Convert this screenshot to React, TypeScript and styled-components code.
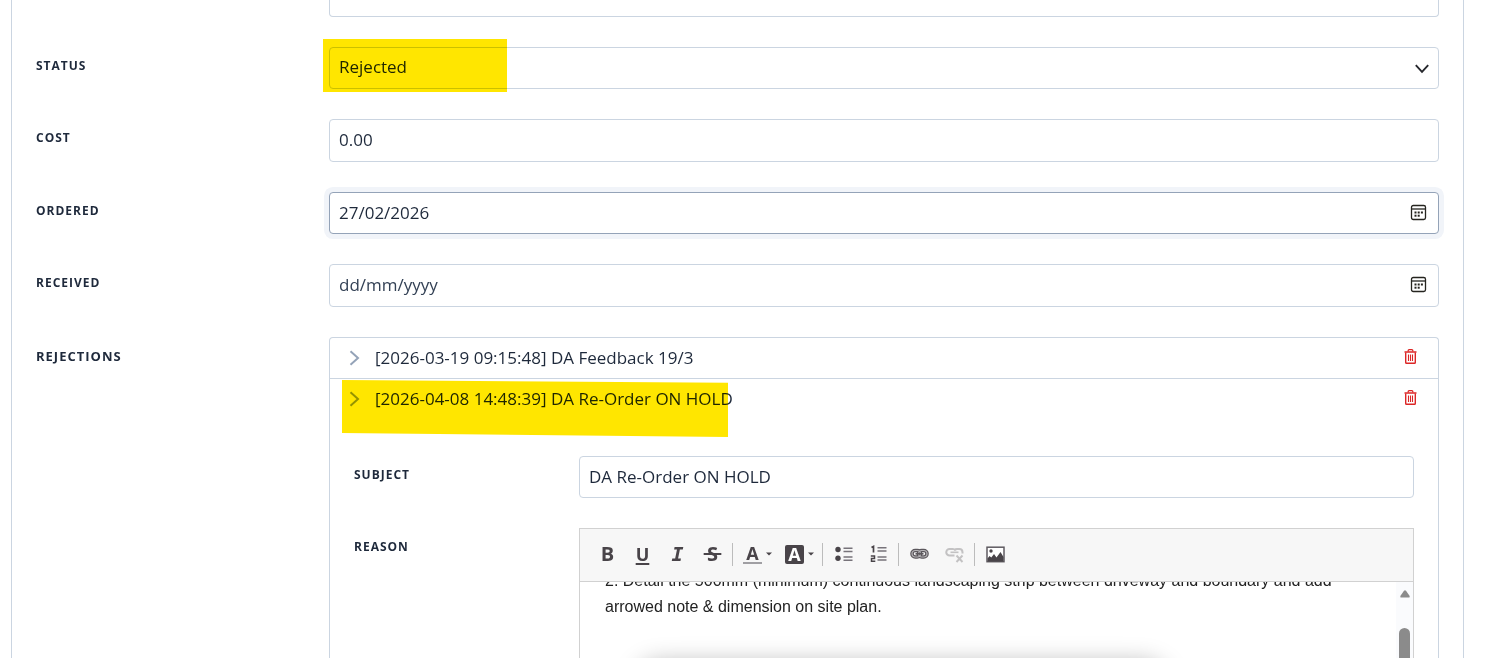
import React from "react";
import styled, { createGlobalStyle, css } from "styled-components";

const Global = createGlobalStyle`
  *, *::before, *::after { box-sizing: border-box; }
  body {
    margin: 0;
    background: #fff;
    color: #1e293b;
    font-family: "Segoe UI", "Open Sans", "Noto Sans", sans-serif;
    font-size: 17px;
    overflow: hidden;
  }
  button, input, select { font: inherit; color: inherit; }
`;

const line = "#cbd5e1";

const Page = styled.main`
  display: flex;
  height: 100vh;
  padding: 0 21px 0 11px;
`;

const Card = styled.form`
  flex: 1;
  min-width: 0;
  display: flex;
  flex-direction: column;
  gap: 30px;
  padding: 0 24px;
  border: solid ${line};
  border-width: 0 1px;
`;

const Row = styled.div<{ $fill?: boolean; $labelWidth?: number }>`
  display: grid;
  grid-template-columns: ${(p) => p.$labelWidth ?? 293}px minmax(0, 1fr);
  ${(p) =>
    p.$fill &&
    css`
      flex: 1;
      min-height: 0;
      grid-template-rows: minmax(0, 1fr);
    `}
`;

const labelText = css<{ $large?: boolean }>`
  padding-top: 9px;
  font-size: ${(p) => (p.$large ? 13 : 12)}px;
  line-height: 20px;
  font-weight: 700;
  letter-spacing: 1px;
  text-transform: uppercase;
`;
const Label = styled.label`
  ${labelText}
`;
const GroupLabel = styled.span<{ $large?: boolean }>`
  ${labelText}
`;

const Control = styled.div`
  position: relative;
  min-width: 0;
`;

const fieldBox = css`
  display: block;
  width: 100%;
  padding: 0 9px;
  border: 1px solid ${line};
  border-radius: 4px;
  background: #fff;
  outline: none;
`;

const TextInput = styled.input<{ $tall?: boolean; $active?: boolean }>`
  ${fieldBox}
  height: ${(p) => (p.$tall ? 43 : 42)}px;
  padding-bottom: 2px;
  &::placeholder {
    color: #334155;
    opacity: 1;
  }
  ${(p) =>
    p.$active &&
    css`
      border-color: #94a3b8;
      box-shadow: 0 0 0 5px #f1f4f9;
    `}
`;

const Select = styled.select`
  ${fieldBox}
  height: 42px;
  padding-bottom: 4px;
  appearance: none;
`;

const FieldEnd = styled.div`
  height: 17px;
  border: 1px solid ${line};
  border-top: 0;
  border-radius: 0 0 4px 4px;
`;

const SelectArrow = styled.svg`
  position: absolute;
  right: 10px;
  top: 17px;
  pointer-events: none;
`;

const PickerButton = styled.button`
  position: absolute;
  right: 12px;
  top: 12px;
  display: flex;
  padding: 0;
  border: 0;
  background: none;
`;

const StatusMark = styled.span`
  position: absolute;
  left: -6px;
  top: -8px;
  width: 184px;
  height: 53px;
  background: #ffe600;
  mix-blend-mode: multiply;
  pointer-events: none;
`;

const EntryMark = styled.span`
  position: absolute;
  left: 12px;
  top: 1px;
  width: 386px;
  height: 57px;
  background: #ffe600;
  clip-path: polygon(0 0, 100% 5%, 100% 100%, 0 93%);
  mix-blend-mode: multiply;
  pointer-events: none;
`;

const Rejections = styled.div`
  min-height: 0;
  display: flex;
  flex-direction: column;
  border: 1px solid ${line};
  border-bottom: 0;
  border-radius: 4px 4px 0 0;
`;

const Entry = styled.section<{ $open?: boolean }>`
  position: relative;
  ${(p) =>
    p.$open
      ? css`
          flex: 1;
          min-height: 0;
          display: flex;
          flex-direction: column;
        `
      : css`
          border-bottom: 1px solid ${line};
        `}
`;

const EntryHead = styled.div`
  display: flex;
  align-items: center;
  height: 40px;
  padding: 0 21px 0 19px;
`;

const EntryToggle = styled.button`
  flex: 1;
  display: flex;
  align-items: center;
  gap: 15px;
  padding: 0;
  border: 0;
  background: none;
  text-align: left;
  line-height: 24px;
`;

const DeleteButton = styled.button`
  display: flex;
  padding: 0 0 4px;
  border: 0;
  background: none;
  color: #dc2626;
`;

const EntryBody = styled.div`
  flex: 1;
  min-height: 0;
  display: flex;
  flex-direction: column;
  gap: 30px;
  padding: 37px 24px 0;
`;

const Editor = styled.div`
  min-height: 0;
  display: flex;
  flex-direction: column;
  border: 1px solid #d1d1d1;
  border-bottom: 0;
`;

const Toolbar = styled.div`
  flex: none;
  display: flex;
  align-items: center;
  height: 53px;
  padding: 0 10px 2px;
  border-bottom: 1px solid #d1d1d1;
  background: #f7f7f7;
`;

const Tool = styled.button<{ $kind?: "bold" | "underline" | "italic" | "strike" }>`
  display: flex;
  align-items: center;
  justify-content: center;
  width: 35px;
  height: 30px;
  padding: 0;
  border: 0;
  background: none;
  color: #494449;
  font-size: 20px;
  font-weight: 700;
  line-height: 24px;
  ${(p) =>
    p.$kind === "italic" &&
    css`
      font-family: "DejaVu Sans Mono", monospace;
      font-style: italic;
    `}
  ${(p) =>
    p.$kind === "underline" &&
    css`
      font-size: 18px;
      text-decoration: underline;
      text-decoration-thickness: 2px;
      text-underline-offset: 2px;
    `}
  ${(p) =>
    p.$kind === "strike" &&
    css`
      text-decoration: line-through;
      text-decoration-thickness: 2px;
      white-space: pre;
    `}
  &:disabled {
    color: #c3c2c3;
  }
`;

const ColorTool = styled.button`
  display: flex;
  align-items: center;
  gap: 4px;
  width: 42px;
  height: 30px;
  padding: 0 0 0 7px;
  border: 0;
  background: none;
  color: #494449;
`;

const Swatch = styled.span<{ $solid?: boolean }>`
  width: 19px;
  height: 19px;
  font-size: 18px;
  font-weight: 700;
  line-height: 18px;
  text-align: center;
  ${(p) =>
    p.$solid
      ? css`
          border-radius: 2px;
          background: #494449;
          color: #fff;
        `
      : css`
          border-bottom: 2px solid #a09fa3;
          line-height: 16px;
        `}
`;

const Separator = styled.span`
  width: 1px;
  height: 23px;
  margin: 0 3px 0 2px;
  background: #bcbcbc;
`;

const Viewport = styled.div`
  position: relative;
  flex: 1;
  min-height: 0;
  display: flex;
  overflow: hidden;
`;

const Document = styled.div`
  flex: 1;
  min-width: 0;
  padding: 0 25px;
  color: #222;
  font: 16px/26px "Liberation Sans", Arial, sans-serif;
  outline: none;
  p {
    margin: -14px 0 0;
  }
`;

const ScrollTrack = styled.div`
  flex: none;
  display: flex;
  flex-direction: column;
  align-items: center;
  gap: 30px;
  width: 17px;
  padding-top: 8px;
  background: #fafbfd;
`;

const ScrollThumb = styled.div`
  flex: 1;
  width: 11px;
  border-radius: 6px 6px 0 0;
  background: #8b8b8b;
`;

const FloatingShadow = styled.div`
  position: absolute;
  left: 56px;
  right: 246px;
  top: 100%;
  height: 60px;
  border-radius: 24px;
  box-shadow: 0 4px 24px rgba(0, 0, 0, 0.28);
`;

const CalendarIcon = () => (
  <svg width="17" height="17" viewBox="0 0 17 17" fill="none" stroke="#25241f">
    <rect x="1.500" y="1.500" width="14" height="14" rx="1.800" strokeWidth="1.300" />
    <path d="M1.500 5h14" strokeWidth="1.300" />
    <g fill="#25241f" stroke="none">
      <rect x="4.500" y="7.500" width="2" height="2" />
      <rect x="7.700" y="7.500" width="2" height="2" />
      <rect x="10.900" y="7.500" width="2" height="2" />
      <rect x="4.500" y="10.700" width="2" height="2" />
      <rect x="7.700" y="10.700" width="2" height="2" />
    </g>
  </svg>
);

const ChevronIcon = () => (
  <svg width="11" height="16" viewBox="0 0 11 16" fill="none" stroke="#94a3b8" strokeWidth="2">
    <path d="M1.500 1.200 9 8l-7.500 6.800" />
  </svg>
);

const TrashIcon = () => (
  <svg width="13" height="15" viewBox="0 0 13 15" fill="none" stroke="currentColor">
    <path d="M4.200 2.500V1.600q0-.9.900-.9h2.800q.9 0 .9.900v.9" strokeWidth="1.300" />
    <path d="M.5 3h12" strokeWidth="2" opacity=".75" />
    <path d="M1.700 3.500v10q0 .8.800.8h8q.8 0 .8-.8v-10" strokeWidth="1.400" />
    <path d="M4.500 5.500v6.500M6.500 5.500v6.500M8.500 5.500v6.500" strokeWidth="1.100" />
  </svg>
);

const CaretIcon = () => (
  <svg width="6" height="4" viewBox="0 0 6 4" fill="#494449">
    <path d="M0 .5h6L3 3.500z" />
  </svg>
);

const BulletListIcon = () => (
  <svg width="18" height="16" viewBox="0 0 18 16" fill="#494449">
    <circle cx="3" cy="3.500" r="2.700" />
    <circle cx="3" cy="12.200" r="2.700" />
    <path d="M8.500 1.500h9v1.500h-9zM8.500 4.800h9v1.500h-9zM8.500 10.200h9v1.500h-9zM8.500 13.500h9v1.500h-9z" fill="#77737a" />
  </svg>
);

const NumberListIcon = () => (
  <svg width="18" height="18" viewBox="0 0 18 18" fill="none">
    <path d="M1.500 2.600 3.500 1.500V7.500" stroke="#494449" strokeWidth="1.700" />
    <path d="M.8 11h3.700v2.500H1.500v2.700h3.800" stroke="#494449" strokeWidth="1.500" />
    <path d="M7.500 2.800h9M7.500 6h9M7.500 12h9M7.500 15h9" stroke="#77737a" strokeWidth="1.500" />
  </svg>
);

const LinkIcon = () => (
  <svg width="19" height="18" viewBox="0 0 19 18" fill="none">
    <g stroke="#5b575c" strokeWidth="3.600">
      <rect x="2" y="5.500" width="8.500" height="6.500" rx="3.200" />
      <rect x="8.500" y="5.500" width="8.500" height="6.500" rx="3.200" />
    </g>
    <g stroke="#b5b3b6" strokeWidth="1.200">
      <rect x="2" y="5.500" width="8.500" height="6.500" rx="3.200" />
      <rect x="8.500" y="5.500" width="8.500" height="6.500" rx="3.200" />
    </g>
    <path d="M5.500 8.750h8" stroke="#5b575c" strokeWidth="1.800" />
  </svg>
);

const UnlinkIcon = () => (
  <svg width="19" height="18" viewBox="0 0 19 18" fill="none" stroke="currentColor">
    <path d="M9.500 10.500H4.500a3 3 0 0 1 0-6.500h3.500q2 0 2.500 1.800M9.500 5q1-1 2.500-1h2.300q3.200 0 3.200 3.300v1.200" strokeWidth="2" />
    <path d="M5.500 7.300h8" strokeWidth="1.600" />
    <path d="m11.500 10.500 6 6.500M17.500 10.500l-6 6.500" strokeWidth="1.900" />
  </svg>
);

const ImageIcon = () => (
  <svg width="19" height="17" viewBox="0 0 19 17">
    <rect x="1" y="1.200" width="17" height="14.500" fill="#fff" stroke="#5f5b61" strokeWidth="1.500" />
    <circle cx="5" cy="5" r="1.700" fill="#494449" />
    <path d="M1.500 15.500v-3l2-2.500 1.800 1.500L8 8l2.500 3.500L14.500 6l3 5v4.500z" fill="#494449" />
  </svg>
);

function DateField({ id, value, tall, active }: { id: string; value: string; tall?: boolean; active?: boolean }) {
  return (
    <Control>
      <TextInput id={id} defaultValue={value} placeholder="dd/mm/yyyy" $tall={tall} $active={active} />
      <PickerButton type="button" aria-label="Open calendar">
        <CalendarIcon />
      </PickerButton>
    </Control>
  );
}

function EntryHeader({ title, open }: { title: string; open?: boolean }) {
  return (
    <EntryHead>
      <EntryToggle type="button" aria-expanded={!!open}>
        <ChevronIcon />
        {title}
      </EntryToggle>
      <DeleteButton type="button" aria-label="Delete rejection">
        <TrashIcon />
      </DeleteButton>
    </EntryHead>
  );
}

export default function App() {
  return (
    <Page>
      <Global />
      <Card>
        <Row>
          <span />
          <FieldEnd />
        </Row>
        <Row>
          <Label htmlFor="status">Status</Label>
          <Control>
            <Select id="status" defaultValue="Rejected">
              <option>Rejected</option>
            </Select>
            <SelectArrow width="14" height="10" viewBox="0 0 14 10" fill="none" stroke="#25272c" strokeWidth="1.900">
              <path d="M.8 1.200 7 7.800l6.200-6.600" />
            </SelectArrow>
            <StatusMark />
          </Control>
        </Row>
        <Row>
          <Label htmlFor="cost">Cost</Label>
          <Control>
            <TextInput id="cost" defaultValue="0.00" $tall />
          </Control>
        </Row>
        <Row>
          <Label htmlFor="ordered">Ordered</Label>
          <DateField id="ordered" value="27/02/2026" active />
        </Row>
        <Row>
          <Label htmlFor="received">Received</Label>
          <DateField id="received" value="" tall />
        </Row>
        <Row $fill>
          <GroupLabel $large>Rejections</GroupLabel>
          <Rejections>
            <Entry>
              <EntryHeader title="[2026-03-19 09:15:48] DA Feedback 19/3" />
            </Entry>
            <Entry $open>
              <EntryHeader title="[2026-04-08 14:48:39] DA Re-Order ON HOLD" open />
              <EntryMark />
              <EntryBody>
                <Row $labelWidth={225}>
                  <Label htmlFor="subject">Subject</Label>
                  <TextInput id="subject" defaultValue="DA Re-Order ON HOLD" />
                </Row>
                <Row $fill $labelWidth={225}>
                  <GroupLabel id="reason">Reason</GroupLabel>
                  <Editor>
                    <Toolbar role="toolbar">
                      <Tool type="button" $kind="bold">B</Tool>
                      <Tool type="button" $kind="underline">U</Tool>
                      <Tool type="button" $kind="italic">I</Tool>
                      <Tool type="button" $kind="strike">{"\u2009S\u2009"}</Tool>
                      <Separator />
                      <ColorTool type="button">
                        <Swatch>A</Swatch>
                        <CaretIcon />
                      </ColorTool>
                      <ColorTool type="button">
                        <Swatch $solid>A</Swatch>
                        <CaretIcon />
                      </ColorTool>
                      <Separator />
                      <Tool type="button" aria-label="Bulleted list"><BulletListIcon /></Tool>
                      <Tool type="button" aria-label="Numbered list"><NumberListIcon /></Tool>
                      <Separator />
                      <Tool type="button" aria-label="Link"><LinkIcon /></Tool>
                      <Tool type="button" aria-label="Unlink" disabled><UnlinkIcon /></Tool>
                      <Separator />
                      <Tool type="button" aria-label="Image"><ImageIcon /></Tool>
                    </Toolbar>
                    <Viewport>
                      <Document role="textbox" aria-labelledby="reason" contentEditable suppressContentEditableWarning>
                        <p>
                          2. Detail the 500mm (minimum) continuous landscaping strip between driveway and boundary and add
                          arrowed note &amp; dimension on site plan.
                        </p>
                      </Document>
                      <FloatingShadow />
                      <ScrollTrack>
                        <svg width="10" height="8" viewBox="0 0 10 8" fill="#8b8b8b">
                          <path d="M4 .8q1-1.200 2 0l3.500 5q.7 1.700-1 1.700h-7q-1.700 0-1-1.700z" />
                        </svg>
                        <ScrollThumb />
                      </ScrollTrack>
                    </Viewport>
                  </Editor>
                </Row>
              </EntryBody>
            </Entry>
          </Rejections>
        </Row>
      </Card>
    </Page>
  );
}
